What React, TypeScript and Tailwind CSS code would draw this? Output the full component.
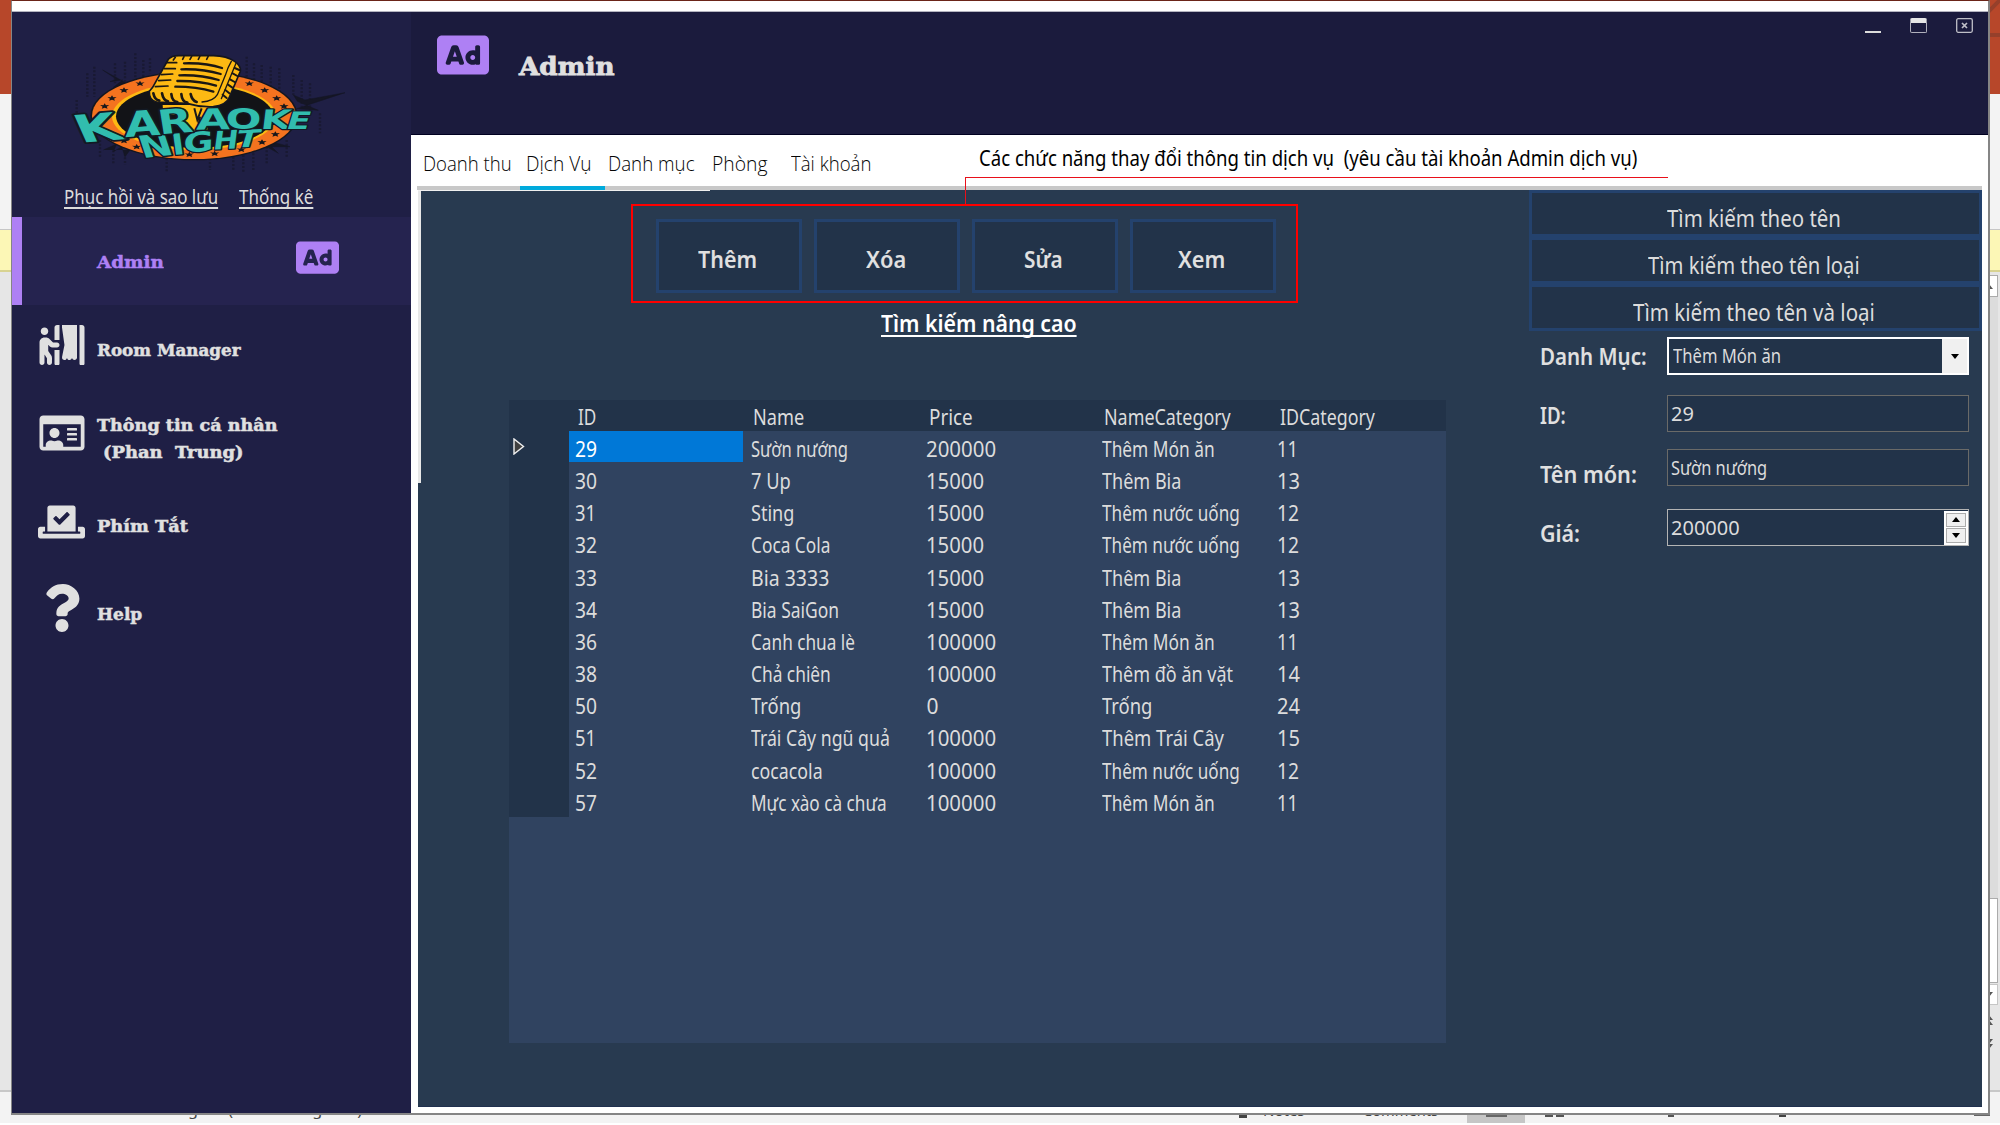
import { useLayoutEffect, useRef, useState } from "react";
import type { ReactNode } from "react";
import { FaAd, FaPersonBooth, FaRegIdCard, FaVoteYea, FaQuestion } from "react-icons/fa";

/** One line of text, condensed or widened to an exact width. */
function Fit({ w, children, className = "", inner = "" }: { w: number; children: ReactNode; className?: string; inner?: string }) {
  const ref = useRef<HTMLSpanElement>(null);
  const [scale, setScale] = useState(1);
  useLayoutEffect(() => {
    const natural = ref.current?.offsetWidth ?? 0;
    if (natural > 0) setScale(w / natural);
  }, [w, children]);
  return (
    <span className={`block shrink-0 ${className}`} style={{ width: w }}>
      <span ref={ref} className={`inline-block origin-left whitespace-pre align-top ${inner}`} style={{ transform: `scaleX(${scale})` }}>
        {children}
      </span>
    </span>
  );
}

const letters: [string, string][] = [
  ["N", "matrix(1.16 -0.12 0.3 0.9 428 474)"],
  ["I", "matrix(1.02 -0.08 0.12 0.86 519 465)"],
  ["G", "matrix(1.1 -0.1 -0.02 0.82 550 459)"],
  ["H", "matrix(0.9 -0.05 -0.1 0.77 637 449)"],
  ["T", "matrix(1.02 -0.05 -0.22 0.73 702 443)"],
  ["K", "matrix(1.7 -0.14 0.5 1.12 244 428)"],
  ["A", "matrix(1.38 -0.1 0.06 1.05 376 412)"],
  ["R", "matrix(1.34 -0.1 0.16 1 479 403)"],
  ["A", "matrix(1.32 -0.02 0 0.87 588 389)"],
  ["O", "matrix(1.26 0 0 0.84 677 386)"],
  ["K", "matrix(1.18 0 -0.1 0.8 779 387)"],
  ["E", "matrix(1.04 0 -0.22 0.72 854 388)"],
];

const stars: [number, number][] = [
  [420, 250], [372, 270], [336, 294], [314, 318], [748, 250], [794, 270], [830, 294], [852, 318],
  [826, 402], [786, 426], [724, 448], [644, 460], [568, 463], [372, 422], [410, 440],
];

const haze: [number, number, number][] = [
  [262, 220, 70], [283, 200, 90], [345, 190, 60], [375, 185, 60], [406, 160, 80], [430, 180, 50], [450, 175, 45],
  [740, 170, 60], [762, 190, 50], [785, 195, 55], [812, 200, 60], [838, 205, 70], [880, 225, 60], [905, 240, 80],
  [930, 250, 80], [340, 440, 50], [375, 450, 45], [500, 475, 40], [630, 475, 35], [700, 470, 40], [730, 465, 50],
  [760, 460, 55], [800, 440, 50], [860, 420, 50], [230, 300, 60], [300, 420, 50], [960, 340, 60],
];

function Logo() {
  return (
    <svg viewBox="165 135 870 390" className="mt-[33px] ml-[43px] h-[130px] w-[290px] shrink-0">
      <g stroke="#191932" strokeWidth="7" strokeDasharray="6 5">
        {haze.map(([x, y, h]) => <line key={`${x}-${y}`} x1={x} y1={y} x2={x} y2={y + h} />)}
      </g>
      <g stroke="#151625" strokeWidth="1.5" fill="#151625">
        <path d="M308 210 L350 238 L330 245 L368 240 L340 262 L380 250Z M1035 278 L915 300 L880 285 L892 304 L955 331 L890 326Z" />
        <path d="M310 450 L350 432 L340 455 L365 440 L375 470 L390 450 M760 455 L800 440 L835 460 L815 440 L870 440 L825 428Z" />
      </g>
      <ellipse cx="582" cy="347" rx="311" ry="134" fill="#14161f" />
      <ellipse cx="582" cy="347" rx="306" ry="130" fill="#f4731f" />
      <ellipse cx="582" cy="349" rx="246" ry="101" fill="#fdb913" />
      <ellipse cx="584" cy="349" rx="236" ry="95" fill="#121317" />
      <g fill="#17171c">
        {stars.map(([x, y]) => (
          <path key={`${x}-${y}`} transform={`translate(${x} ${y}) scale(1.25 1)`} d="M0-8 3-2 11-3 5 2 7 8 0 5-7 8-5 2-11-3-3-2Z" />
        ))}
      </g>
      <path d="M488 315H592L600 322 640 318 620 395H570L545 345H490Z" fill="#fdb913" />
      <path d="M583 325 592 360 605 325M600 350 594 385" stroke="#17171c" strokeWidth="6" fill="none" />
      <path
        d="M505 178Q515 166 540 167H640Q680 168 704 184Q724 198 721 214L688 292Q680 315 640 320Q600 322 560 310L470 306Q446 300 448 274L458 262Z"
        fill="#fdb913" stroke="#14161f" strokeWidth="5"
      />
      <g fill="none" stroke="#1b1714" strokeLinecap="round">
        <path strokeWidth="7" d="M552 190Q620 188 666 204M544 208Q610 206 662 222M538 226Q605 224 656 240M532 243Q600 242 648 257M526 260Q590 260 640 275" />
        <path strokeWidth="5" d="M500 188H530M494 206 526 206M484 224 518 222M476 242 512 240M466 260 504 258" />
        <path strokeWidth="8" d="M460 280Q464 300 478 302M486 280Q490 302 504 304M514 282Q516 304 532 306M544 282Q546 306 562 308M572 282Q576 302 590 306" />
        <path strokeWidth="5" d="M552 170 548 178M575 169 570 178M600 168 595 178M625 168 620 178M526 172 520 180" />
        <path strokeWidth="4" d="M694 184Q684 200 676 226L652 284Q640 304 606 306M708 190 664 296" />
        <path strokeWidth="6" d="M704 204 718 210M698 220 712 228M690 238 704 246M684 254 696 262M676 270 688 280M668 284 680 294" />
      </g>
      <g fill="#31bdae" stroke="#121a24" strokeWidth="9" strokeLinejoin="round" className="font-['DejaVu_Sans'] text-[100px] font-bold [paint-order:stroke]">
        {letters.map(([c, m], i) => <text key={i} transform={m}>{c}</text>)}
      </g>
    </svg>
  );
}

type Cell = [string, number];
const rows: Cell[][] = [
  [["29", 22], ["Sườn nướng", 97], ["200000", 70], ["Thêm Món ăn", 113], ["11", 21]],
  [["30", 22], ["7 Up", 40], ["15000", 58], ["Thêm Bia", 79], ["13", 23]],
  [["31", 21], ["Sting", 43], ["15000", 58], ["Thêm nước uống", 138], ["12", 22]],
  [["32", 22], ["Coca Cola", 79], ["15000", 58], ["Thêm nước uống", 138], ["12", 22]],
  [["33", 22], ["Bia 3333", 78], ["15000", 58], ["Thêm Bia", 79], ["13", 23]],
  [["34", 22], ["Bia SaiGon", 88], ["15000", 58], ["Thêm Bia", 79], ["13", 23]],
  [["36", 22], ["Canh chua lè", 104], ["100000", 70], ["Thêm Món ăn", 113], ["11", 21]],
  [["38", 22], ["Chả chiên", 80], ["100000", 70], ["Thêm đồ ăn vặt", 131], ["14", 23]],
  [["50", 22], ["Trống", 50], ["0", 12], ["Trống", 50], ["24", 23]],
  [["51", 21], ["Trái Cây ngũ quả", 139], ["100000", 70], ["Thêm Trái Cây", 122], ["15", 23]],
  [["52", 22], ["cocacola", 72], ["100000", 70], ["Thêm nước uống", 138], ["12", 22]],
  [["57", 22], ["Mực xào cà chưa", 136], ["100000", 70], ["Thêm Món ăn", 113], ["11", 21]],
];
const headers: Cell[] = [["ID", 18], ["Name", 51], ["Price", 44], ["NameCategory", 127], ["IDCategory", 95]];

function DataGrid() {
  return (
    <div className="mt-[62px] ml-[91px] flex h-[643px] w-[937px] flex-col bg-[#304360] text-[21px] text-[#dcdcdc]">
      <div className="flex h-[31px] bg-[#223349] pl-[60px]">
        {headers.map(([t, w]) => (
          <div key={t} className="w-[175.4px] pl-[9px] leading-[34px]"><Fit w={w}>{t}</Fit></div>
        ))}
      </div>
      {rows.map((cells, r) => (
        <div key={r} className="flex h-[32.17px]">
          <div className="w-[60px] shrink-0 bg-[#223349] pt-[7px] pl-[4px]">
            {r === 0 && (
              <svg viewBox="0 0 12 17" className="h-[17px] w-[12px]">
                <path d="M1 1V16L10.5 8.5Z" fill="#404040" stroke="#f0f0f0" strokeWidth="1.4" />
              </svg>
            )}
          </div>
          {cells.map(([t, w], c) => (
            <div
              key={c}
              className={`h-[30.5px] leading-[37px] ${c === 0 ? "w-[174px] pl-[6px]" : "w-[175.4px] pl-[8px]"} ${r === 0 && c === 0 ? "bg-[#0078d7] text-white" : ""}`}
            >
              <Fit w={w}>{t}</Fit>
            </div>
          ))}
        </div>
      ))}
    </div>
  );
}

function Sidebar() {
  return (
    <aside className="flex w-[399px] shrink-0 flex-col bg-[#1f1f45] font-['DejaVu_Serif'] text-[17px] font-bold text-[#e0e0e0] [-webkit-text-stroke:0.5px_currentColor]">
      <Logo />
      <div className="mt-[6px] mb-[6px] flex h-[30px] gap-[21px] pl-[52px] font-['Noto_Sans'] text-[20px] leading-[31px] font-normal text-[#dcdcdc] [-webkit-text-stroke:0]">
        <Fit w={154} inner="underline decoration-[1.5px] underline-offset-[3px] [text-decoration-skip-ink:none]">Phục hồi và sao lưu</Fit>
        <Fit w={74} inner="underline decoration-[1.5px] underline-offset-[3px] [text-decoration-skip-ink:none]">Thống kê</Fit>
      </div>
      <div className="flex h-[88px] items-center border-l-[10px] border-[#ae80f4] bg-[#25234f] pl-[75px] text-[#ae80f4]">
        <Fit w={67} className="mt-[4px]">Admin</Fit>
        <FaAd className="-mt-[7px] ml-[132px] h-[43px] w-[43px]" />
      </div>
      <div className="flex h-[88px] items-center pl-[27px]">
        <FaPersonBooth className="-mt-[8px] mr-[12px] h-[40px] w-[46px]" />
        <Fit w={144} className="mt-[3px]">Room Manager</Fit>
      </div>
      <div className="flex h-[88px] items-center pl-[27px]">
        <FaRegIdCard className="-mt-[8px] mr-[12px] h-[40px] w-[46px]" />
        <div className="mt-[4px] leading-[27.5px]">
          <Fit w={180}>Thông tin cá nhân</Fit>
          <Fit w={140} className="ml-[6px]">(Phan  Trung)</Fit>
        </div>
      </div>
      <div className="flex h-[88px] items-center pl-[26px]">
        <FaVoteYea className="-mt-[7px] mr-[12px] h-[38px] w-[47px]" />
        <Fit w={91} className="mt-[3px]">Phím Tắt</Fit>
      </div>
      <div className="flex h-[88px] items-center pl-[32px]">
        <FaQuestion className="-mt-[11px] mr-[17px] h-[48px] w-[36px]" />
        <Fit w={45} className="mt-[3px]">Help</Fit>
      </div>
    </aside>
  );
}

function Header() {
  return (
    <header className="flex h-[123px] border-b border-[#000020] bg-[#1b1b3d] pl-[26px]">
      <FaAd className="mt-[17px] h-[52px] w-[52px] text-[#ae80f4]" />
      <Fit w={96} className="mt-[40px] ml-[30px] h-[30px] font-['DejaVu_Serif'] text-[23.5px] leading-[30px] font-bold text-[#e0e0e0] [-webkit-text-stroke:0.8px_currentColor]">Admin</Fit>
      <div className="mt-[6px] mr-[15px] ml-auto flex h-[15px] items-end gap-[29px]">
        <div className="h-[2px] w-[16px] bg-[#dcdcdc]" />
        <div className="h-[15px] w-[17px] rounded-[2px] border border-t-[5px] border-[#b0b0bc] border-t-[#e6e6e6]" />
        <svg viewBox="0 0 17 15" className="h-[15px] w-[17px]" fill="none" stroke="#c0c0c8">
          <rect x="0.7" y="0.7" width="15.6" height="13.6" rx="1.5" strokeWidth="1.3" />
          <path d="M6 5 11 10M11 5 6 10" strokeWidth="1.7" />
        </svg>
      </div>
    </header>
  );
}

function Tabs() {
  return (
    <nav className="flex h-[51px] pl-[12px] font-['Open_Sans'] text-[20px] leading-[58px] font-light text-[#050505]">
      <Fit w={89}>Doanh thu</Fit>
      <Fit w={66} className="ml-[14px]">Dịch Vụ</Fit>
      <Fit w={87} className="ml-[16px]">Danh mục</Fit>
      <Fit w={55} className="ml-[17px]">Phòng</Fit>
      <Fit w={80} className="ml-[24px]">Tài khoản</Fit>
      <Fit w={658} className="ml-[108px] font-['Noto_Sans'] text-[21.5px] leading-[46px] font-normal text-black">
        Các chức năng thay đổi thông tin dịch vụ  (yêu cầu tài khoản Admin dịch vụ)
      </Fit>
    </nav>
  );
}

const actions: Cell[] = [["Thêm", 59], ["Xóa", 40], ["Sửa", 39], ["Xem", 47]];
const searches: Cell[] = [["Tìm kiếm theo tên", 174], ["Tìm kiếm theo tên loại", 212], ["Tìm kiếm theo tên và loại", 242]];
const labels: Cell[] = [["Danh Mục:", 107], ["ID:", 26], ["Tên món:", 97], ["Giá:", 40]];

function Arrow({ up = false, className = "" }: { up?: boolean; className?: string }) {
  return (
    <svg viewBox="0 0 8 5" className={`h-[5px] w-[8px] ${className}`}>
      <path d={up ? "M0 5H8L4 0Z" : "M0 0H8L4 5Z"} fill="currentColor" />
    </svg>
  );
}

function DetailPane() {
  return (
    <div className="w-[453px] shrink-0 text-[#dcdcdc]">
      {searches.map(([t, w]) => (
        <div key={t} className="flex h-[47px] justify-center border-[3px] border-[#24426d] bg-[#223349] pr-[4px] text-[23.5px] leading-[50px]">
          <Fit w={w}>{t}</Fit>
        </div>
      ))}
      <div className="flex pl-[11px]">
        <div className="mt-[10px] flex w-[127px] flex-col gap-[29px] text-[23px] leading-[30px] font-semibold text-[#e0e0e0]">
          {labels.map(([t, w]) => <Fit key={t} w={w}>{t}</Fit>)}
        </div>
        <div className="mt-[6px] w-[302px] text-[20px]">
          <div className="flex h-[38px] items-center border-2 border-white bg-[#223349] pl-[4px]">
            <Fit w={108}>Thêm Món ăn</Fit>
            <div className="ml-auto flex h-full w-[25px] items-center justify-center bg-[#f0f0f0] text-black"><Arrow /></div>
          </div>
          <div className="mt-[20px] flex h-[37px] items-center border border-[#6a6a68] bg-[#223349] pl-[3px]"><Fit w={23}>29</Fit></div>
          <div className="mt-[17px] flex h-[37px] items-center border border-[#6a6a68] bg-[#223349] pl-[3px]"><Fit w={96}>Sườn nướng</Fit></div>
          <div className="mt-[23px] flex h-[37px] items-center border border-[#b4b4b4] bg-[#223349] pl-[3px]">
            <Fit w={69}>200000</Fit>
            <div className="ml-auto flex h-[34px] w-[24px] flex-col gap-px bg-white p-[2px] text-black">
              <div className="flex flex-1 items-center justify-center border border-[#acacac] bg-[#f0f0f0]"><Arrow up /></div>
              <div className="flex flex-1 items-center justify-center border border-[#acacac] bg-[#f0f0f0]"><Arrow /></div>
            </div>
          </div>
        </div>
      </div>
    </div>
  );
}

function Workspace() {
  return (
    <div className="mx-[6px] mb-[6px] flex flex-1 flex-col">
      <div className="h-[4px] bg-[#c8c8c8] pl-[103px]"><div className="h-full w-[85px] bg-[#00aadc]" /></div>
      <div className="relative ml-px flex flex-1 border-b border-[#20304f] bg-[#283a50]">
        <div className="absolute top-0 left-0 h-[293px] w-[3px] bg-[#e8e8e8]" />
        <div className="absolute top-0 left-0 h-px w-[292px] bg-[#f0f0f0]" />
        <div className="flex-1">
          <div className="mt-[29px] ml-[238px] flex gap-[12px]">
            {actions.map(([t, w]) => (
              <div key={t} className="flex h-[74px] w-[146px] justify-center border-[3px] border-[#24426d] bg-[#223349] pr-[3px] text-[24px] leading-[74px] font-semibold text-[#e0e0e0]">
                <Fit w={w}>{t}</Fit>
              </div>
            ))}
          </div>
          <Fit
            w={196}
            className="mt-[15px] ml-[463px] h-[30px] text-[23px] leading-[31px] font-semibold text-white"
            inner="underline decoration-2 underline-offset-[3px] [text-decoration-skip-ink:none]"
          >
            Tìm kiếm nâng cao
          </Fit>
          <DataGrid />
        </div>
        <DetailPane />
      </div>
    </div>
  );
}

/** Presentation editor behind the application window. */
function Backdrop() {
  return (
    <div className="flex h-[1125px] flex-col bg-white">
      <div className="h-[94px] bg-[#b7472a]">
        <svg viewBox="0 0 12 94" className="ml-auto h-[94px] w-[12px]"><path d="M0 12 12 0M0 35H12" stroke="#96402b" strokeWidth="4" /></svg>
      </div>
      <div className="h-[136px] border-b border-[#c6c6c6] bg-[#f3f3f3]" />
      <div className="h-[42px] border-b-2 border-[#d8d391] bg-[#fcf7b6]" />
      <div className="flex h-[820px] flex-col items-end border-b-2 border-[#c8c8c8] bg-[#e6e6e6] pr-[2px] text-[#555555]">
        <div className="mt-[3px] flex h-[22px] w-[18px] items-center border border-[#ababab] bg-white pl-[4px]"><Arrow up /></div>
        <div className="h-[601px] w-[18px] bg-[#dcdcdc]" />
        <div className="h-[85px] w-[18px] border border-[#ababab] bg-white" />
        <div className="mt-px flex h-[21px] w-[18px] items-center border border-[#c6c6c6] bg-white pl-[4px]"><Arrow /></div>
        <div className="mt-[10px] flex w-[18px] flex-col pl-[5px]"><Arrow up /><Arrow up /></div>
        <div className="mt-[14px] flex w-[18px] flex-col pl-[5px]"><Arrow /><Arrow /></div>
      </div>
      <div className="flex h-[31px] bg-[#f3f3f3] text-[15px] leading-[35px] text-[#444444]">
        <Fit w={193} className="ml-[169px]">English (United Kingdom)</Fit>
        <div className="mt-[21px] ml-[877px] h-[5px] w-[8px] bg-[#444444]" />
        <Fit w={42} className="ml-[16px] leading-[37px]">Notes</Fit>
        <Fit w={75} className="ml-[58px] leading-[37px]">Comments</Fit>
        <div className="ml-[29px] h-full w-[58px] bg-[#c6c6c6] pt-[22px] pl-[19px]"><div className="h-[3px] w-[21px] bg-[#666666]" /></div>
        <div className="mt-[22px] ml-[20px] flex gap-[3px]"><i className="h-[3px] w-[8px] bg-[#555555]" /><i className="h-[3px] w-[8px] bg-[#555555]" /></div>
        <div className="mt-[22px] ml-[104px] h-[3px] w-[6px] bg-[#555555]" />
        <div className="mt-[22px] ml-[105px] h-[3px] w-[7px] bg-[#444444]" />
        <div className="mr-[10px] ml-auto h-[24px] w-[16px] border-r-2 border-b-2 border-[#666666]" />
      </div>
    </div>
  );
}

export default function App() {
  return (
    <div className="relative h-[1125px] w-[2000px] overflow-hidden font-['Noto_Sans',sans-serif]">
      <Backdrop />
      <div className="absolute top-0 left-[11px] flex h-[1115px] w-[1979px] flex-col border-t border-r-2 border-b-2 border-l border-[#858585] border-t-[#6b2418] bg-white">
        <div className="h-[11px] shrink-0 border-b border-[#b4b4c0]" />
        <div className="flex min-h-0 flex-1">
          <Sidebar />
          <main className="flex flex-1 flex-col">
            <Header />
            <Tabs />
            <Workspace />
          </main>
        </div>
      </div>
      <div className="absolute top-[204px] left-[631px] h-[99px] w-[667px] border-2 border-[#fe0000]" />
      <div className="absolute top-[177px] left-[965px] h-[27px] w-[703px] border-t border-l border-[#e8101a]" />
    </div>
  );
}
